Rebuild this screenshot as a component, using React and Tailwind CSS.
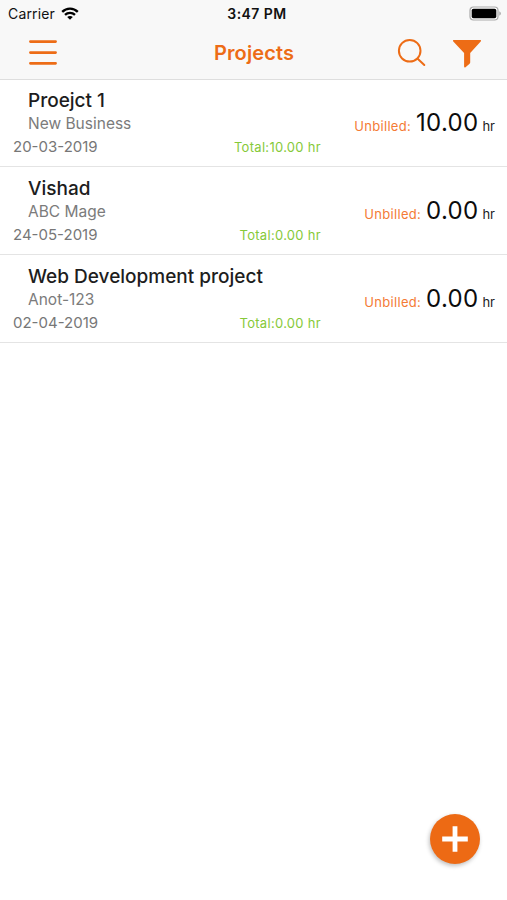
import React from 'react';

const projects = [
  { id: 1, name: 'Proejct 1', client: 'New Business', date: '20-03-2019', total: '10.00', unbilled: '10.00' },
  { id: 2, name: 'Vishad', client: 'ABC Mage', date: '24-05-2019', total: '0.00', unbilled: '0.00' },
  { id: 3, name: 'Web Development project', client: 'Anot-123', date: '02-04-2019', total: '0.00', unbilled: '0.00' },
];

const WifiIcon = () => (
  <svg width="18" height="13" viewBox="0 0 18 13" fill="none" stroke="#000" strokeWidth="2.3">
    <path d="M1.2 4.9C5.6.4 12.4.4 16.8 4.9" />
    <path d="M4 7.9c2.9-2.8 7.1-2.8 10 0" />
    <path d="M9 12.7 6.2 10c1.6-1.4 4-1.4 5.6 0z" fill="#000" stroke="none" />
  </svg>
);

const BatteryIcon = () => (
  <svg width="33" height="15" viewBox="0 0 33 15">
    <rect x="1" y="1" width="28" height="13" rx="3.5" fill="#fff" stroke="#a9a9a9" strokeWidth="1.2" />
    <rect x="2.7" y="2.7" width="24.6" height="9.6" rx="1.8" fill="#000" />
    <path d="M30.4 5.3c1.9.8 1.9 3.6 0 4.4z" fill="#a0a0a0" />
  </svg>
);

const StatusBar = () => (
  <div className="grid h-[27px] grid-cols-3 items-center pl-2 pr-[5px] text-[#111]">
    <div className="flex items-center gap-[6px]">
      <span className="text-[14px] leading-[18px] tracking-[0.15px]">Carrier</span>
      <WifiIcon />
    </div>
    <span className="pl-1 text-center text-[14px] font-semibold leading-[18px] tracking-[0.45px]">3:47 PM</span>
    <div className="flex justify-end">
      <BatteryIcon />
    </div>
  </div>
);

const NavBar = () => (
  <div className="grid h-[52px] grid-cols-3 items-center pb-px pl-7 pr-[25px] text-[#ed6c16]">
    <button type="button" aria-label="Menu" className="w-[30px]">
      <svg width="30" height="30" viewBox="0 0 30 30" stroke="currentColor" strokeWidth="2.7" strokeLinecap="round">
        <path d="M2.4 3.6h25.2M2.4 14.6h25.2M2.4 25.3h25.2" />
      </svg>
    </button>
    <h1 className="pr-[2px] text-center text-[20px] font-semibold leading-6 tracking-[0.1px]">Projects</h1>
    <div className="flex items-center justify-end gap-[25px]">
      <button type="button" aria-label="Search">
        <svg width="30" height="30" viewBox="0 0 30 30" fill="none" stroke="currentColor" strokeWidth="2" strokeLinecap="round">
          <circle cx="12.7" cy="12.8" r="10.8" />
          <path d="m20.7 20.7 6.6 6.3" />
        </svg>
      </button>
      <button type="button" aria-label="Filter">
        <svg width="30" height="30" viewBox="0 0 30 30" fill="currentColor">
          <path d="M1.3 3.5c-.6-.7-.3-1.4.6-1.4h26.2c.9 0 1.2.7.6 1.4L18.2 15v9.5c0 .7-.3 1.1-.9 1.6l-3.8 3.1c-.7.6-1.4.3-1.4-.6V15z" />
        </svg>
      </button>
    </div>
  </div>
);

const ProjectRow = ({ project }) => (
  <li className="flex h-[88px] border-b border-[#e4e4e4] pl-[13px] pr-3">
    <div className="w-[308px] shrink-0 pt-[10px]">
      <h2 className="pl-[15px] text-[19px] font-medium leading-6 text-[#1d1d1d]">{project.name}</h2>
      <p className="pl-[15px] text-[15.5px] leading-[22px] text-[#7b7b7b]">{project.client}</p>
      <div className="flex items-start justify-between">
        <span className="text-[15px] leading-[23px] text-[#777]">{project.date}</span>
        <span className="pt-px text-[13px] leading-[23px] tracking-[0.3px] text-[#86c939]">Total:{project.total} hr</span>
      </div>
    </div>
    <div className="flex flex-1 items-baseline justify-end whitespace-nowrap pt-[27px]">
      <span className="mr-[5px] text-[13px] tracking-[0.3px] text-[#f47b35]">Unbilled:</span>
      <span className="text-[24px] leading-[33px] tracking-[0.3px] text-[#0c0c0c]">{project.unbilled}</span>
      <span className="ml-[4px] text-[13px] text-[#222]">hr</span>
    </div>
  </li>
);

const App = () => {
  return (
    <div className="relative flex h-[900px] w-[507px] flex-col overflow-hidden bg-white font-['Inter',sans-serif]">
      <header className="border-b border-[#dedede] bg-[#f8f8f8]">
        <StatusBar />
        <NavBar />
      </header>

      <main className="-mt-px flex-1">
        <ul>
          {projects.map((project) => (
            <ProjectRow key={project.id} project={project} />
          ))}
        </ul>
      </main>

      {/* Floating add button */}
      <button
        type="button"
        aria-label="Add project"
        className="absolute bottom-[36px] right-[27px] flex size-[50px] items-center justify-center rounded-full bg-[#ed6a14] shadow-[-1px_2px_4px_rgba(0,0,0,0.25)]"
      >
        <svg width="28" height="28" viewBox="0 0 28 28" stroke="#fff" strokeWidth="4.8" strokeLinejoin="round">
          <path d="M14 1.2v25.6M1.2 14h25.6" />
        </svg>
      </button>
    </div>
  );
};

export default App;
